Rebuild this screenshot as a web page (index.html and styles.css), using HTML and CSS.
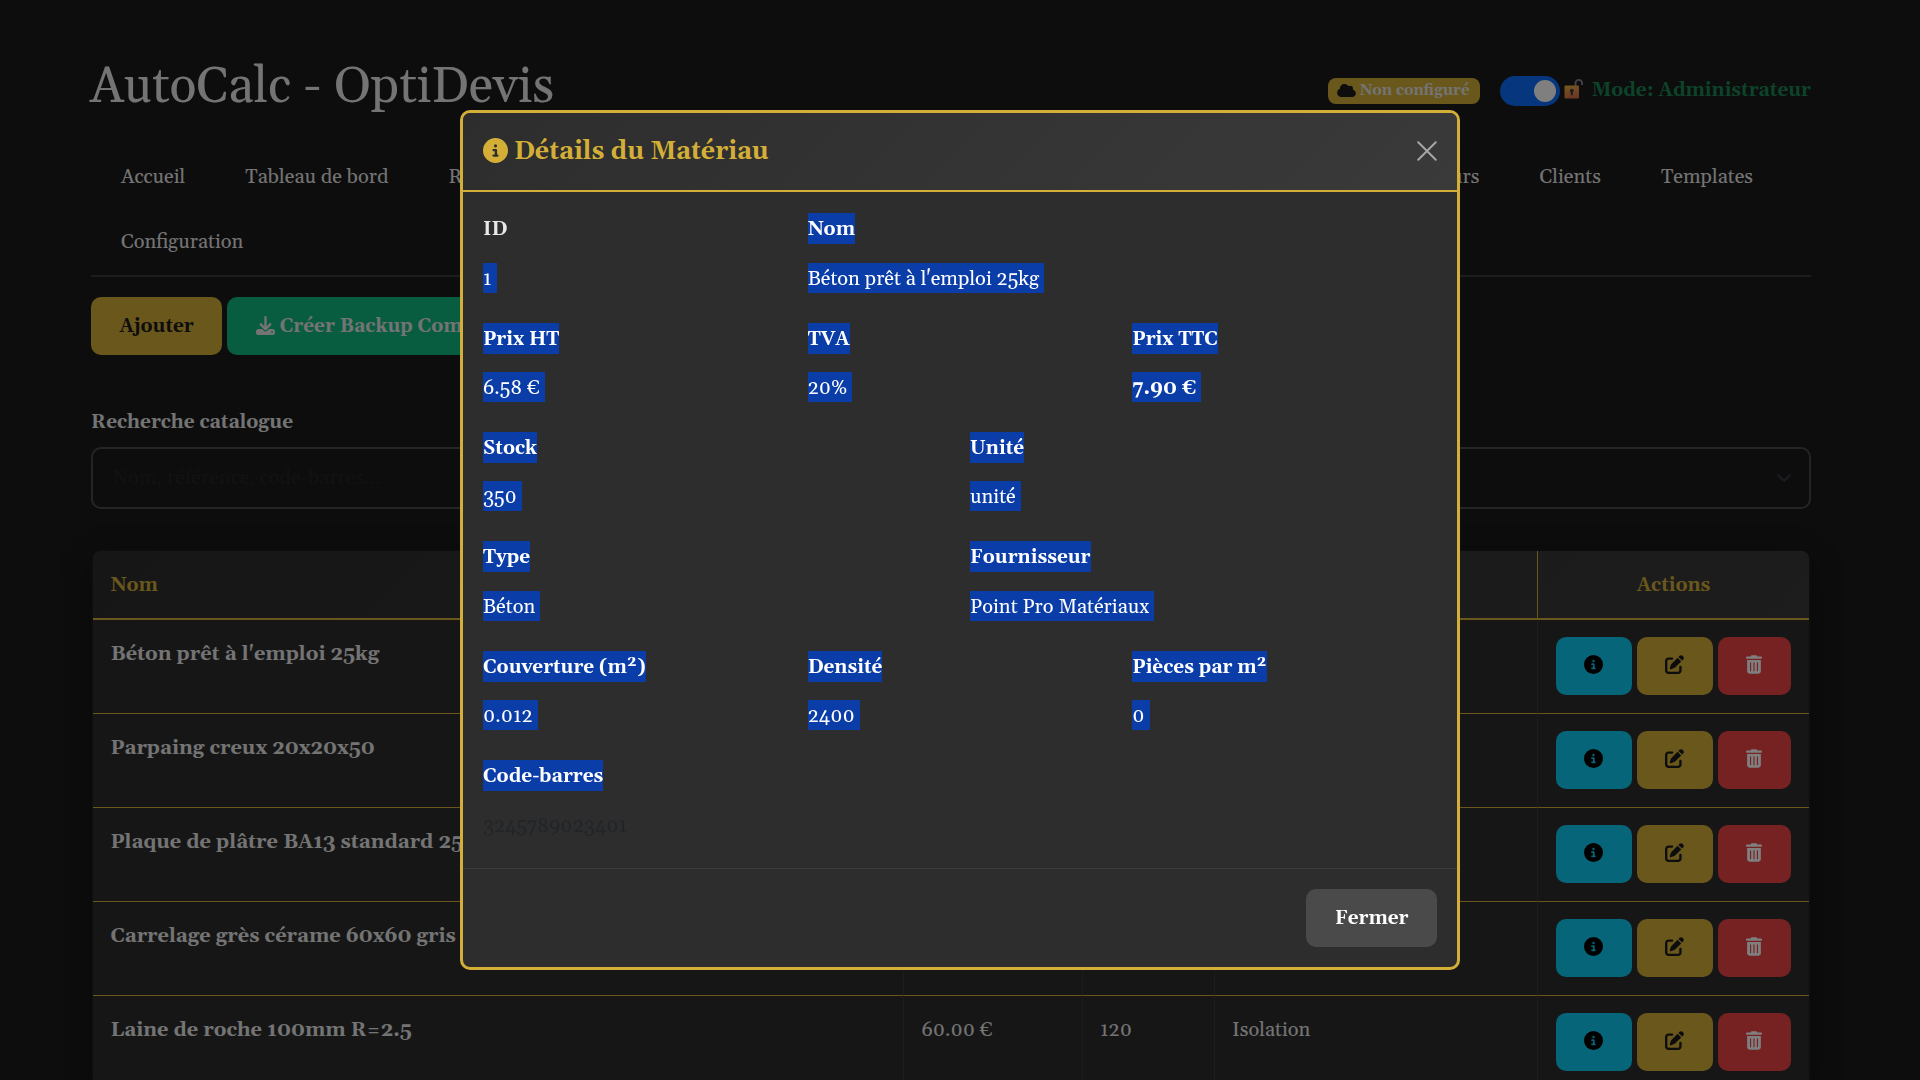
FILE: index.html
```html
<!DOCTYPE html>
<html lang="fr">
<head>
<meta charset="utf-8">
<title>AutoCalc - OptiDevis</title>
<link rel="stylesheet" href="styles.css">
</head>
<body>
<svg class="sprite" aria-hidden="true">
  <symbol id="info" viewBox="0 0 512 512"><path d="M256 512A256 256 0 1 0 256 0a256 256 0 1 0 0 512zM216 336h24V272H216c-13.300 0-24-10.700-24-24s10.700-24 24-24h48c13.300 0 24 10.700 24 24v88h8c13.300 0 24 10.700 24 24s-10.700 24-24 24H216c-13.300 0-24-10.700-24-24s10.700-24 24-24zm40-208a32 32 0 1 1 0 64 32 32 0 1 1 0-64z"/></symbol>
  <symbol id="edit" viewBox="0 0 512 512"><path d="M471.600 21.700c-21.900-21.900-57.300-21.900-79.200 0L362.300 51.700l97.900 97.900 30.100-30.100c21.900-21.900 21.900-57.300 0-79.200L471.600 21.700zm-299.200 220c-6.100 6.100-10.800 13.600-13.500 21.900l-29.600 88.800c-2.900 8.600-.6 18.100 5.800 24.600s15.900 8.700 24.600 5.800l88.800-29.600c8.200-2.700 15.700-7.400 21.900-13.500L437.700 172.300 339.700 74.300 172.400 241.700zM96 64C43 64 0 107 0 160V416c0 53 43 96 96 96H352c53 0 96-43 96-96V320c0-17.700-14.300-32-32-32s-32 14.300-32 32v96c0 17.700-14.300 32-32 32H96c-17.700 0-32-14.300-32-32V160c0-17.700 14.300-32 32-32h96c17.700 0 32-14.300 32-32s-14.300-32-32-32H96z"/></symbol>
  <symbol id="trash" viewBox="0 0 448 512"><path d="M135.200 17.700C140.600 6.800 151.700 0 163.800 0H284.200c12.100 0 23.200 6.800 28.600 17.700L320 32h96c17.700 0 32 14.300 32 32s-14.300 32-32 32H32C14.300 96 0 81.700 0 64S14.300 32 32 32h96l7.200-14.300zM32 128H416V448c0 35.300-28.700 64-64 64H96c-35.300 0-64-28.700-64-64V128zm96 64c-8.800 0-16 7.200-16 16V432c0 8.800 7.200 16 16 16s16-7.200 16-16V208c0-8.800-7.200-16-16-16zm96 0c-8.800 0-16 7.200-16 16V432c0 8.800 7.200 16 16 16s16-7.200 16-16V208c0-8.800-7.200-16-16-16zm96 0c-8.800 0-16 7.200-16 16V432c0 8.800 7.200 16 16 16s16-7.200 16-16V208c0-8.800-7.200-16-16-16z"/></symbol>
  <symbol id="download" viewBox="0 0 512 512"><path d="M288 32c0-17.700-14.300-32-32-32s-32 14.300-32 32V274.700l-73.400-73.400c-12.500-12.500-32.800-12.500-45.300 0s-12.500 32.800 0 45.300l128 128c12.500 12.500 32.800 12.500 45.300 0l128-128c12.500-12.500 12.500-32.800 0-45.300s-32.800-12.500-45.300 0L288 274.700V32zM64 352c-35.300 0-64 28.700-64 64v32c0 35.300 28.700 64 64 64H448c35.300 0 64-28.700 64-64V416c0-35.300-28.700-64-64-64H346.500l-45.300 45.300c-25 25-65.500 25-90.500 0L165.500 352H64zm368 56a24 24 0 1 1 0 48 24 24 0 1 1 0-48z"/></symbol>
  <symbol id="cloud" viewBox="0 0 640 512"><path d="M0 336c0 79.500 64.500 144 144 144H512c70.700 0 128-57.300 128-128c0-61.900-44-113.600-102.400-125.400c4.100-10.700 6.400-22.400 6.400-34.600c0-53-43-96-96-96c-19.700 0-38.100 6-53.300 16.200C367 64.200 315.300 32 256 32C167.600 32 96 103.600 96 192c0 2.700 .1 5.400 .2 8.100C40.200 219.800 0 273.200 0 336z"/></symbol>
</svg>

<div class="page">
  <header class="top">
    <h1>AutoCalc - OptiDevis</h1>
    <div class="status">
      <span class="badge"><svg class="ic-cloud"><use href="#cloud"/></svg>Non configuré</span>
      <span class="switch"><span class="knob"></span></span>
      <svg class="lock" viewBox="0 0 20 20">
        <defs><linearGradient id="lockfill" x1="0" y1="0" x2="0.300" y2="1"><stop offset="0" stop-color="#efb440"/><stop offset="1" stop-color="#d97048"/></linearGradient></defs>
        <path d="M11.500 7V4.200a3.300 3.300 0 0 1 6.600 0V6" fill="none" stroke="#8d8494" stroke-width="1.800"/>
        <rect x="0.500" y="6.500" width="14.500" height="13" rx="1.200" fill="url(#lockfill)"/>
        <path d="M7.800 9.700a2 2 0 0 1 1 3.700v2.800h-2v-2.800a2 2 0 0 1 1-3.700z" fill="#45303c"/>
      </svg>
      <span class="mode">Mode: Administrateur</span>
    </div>
  </header>

  <nav class="nav">
    <div class="nav-row">
      <a>Accueil</a><a>Tableau de bord</a><a>Rapports</a>
      <a class="push">Fournisseurs</a><a>Clients</a><a>Templates</a>
    </div>
    <div class="nav-row"><a>Configuration</a></div>
  </nav>

  <div class="toolbar">
    <button class="btn gold">Ajouter</button>
    <button class="btn green"><svg class="ic"><use href="#download"/></svg>Créer Backup Complet</button>
  </div>

  <div class="search">
    <div class="field"><label>Recherche catalogue</label><div class="box placeholder">Nom, référence, code-barres...</div></div>
    <div class="field"><div class="box select"><svg class="chev" viewBox="0 0 16 16"><path d="m2 5 6 6 6-6"/></svg></div></div>
  </div>

  <div class="table">
    <div class="row head"><div>Nom</div><div></div><div></div><div></div><div>Actions</div></div>
    <div class="row"><div>Béton prêt à l'emploi 25kg</div><div></div><div></div><div></div><div><button class="btn cyan"><svg class="ic"><use href="#info"/></svg></button><button class="btn gold"><svg class="ic"><use href="#edit"/></svg></button><button class="btn red"><svg class="ic slim"><use href="#trash"/></svg></button></div></div>
    <div class="row"><div>Parpaing creux 20x20x50</div><div></div><div></div><div></div><div><button class="btn cyan"><svg class="ic"><use href="#info"/></svg></button><button class="btn gold"><svg class="ic"><use href="#edit"/></svg></button><button class="btn red"><svg class="ic slim"><use href="#trash"/></svg></button></div></div>
    <div class="row"><div>Plaque de plâtre BA13 standard 250x120</div><div></div><div></div><div></div><div><button class="btn cyan"><svg class="ic"><use href="#info"/></svg></button><button class="btn gold"><svg class="ic"><use href="#edit"/></svg></button><button class="btn red"><svg class="ic slim"><use href="#trash"/></svg></button></div></div>
    <div class="row"><div>Carrelage grès cérame 60x60 gris</div><div></div><div></div><div></div><div><button class="btn cyan"><svg class="ic"><use href="#info"/></svg></button><button class="btn gold"><svg class="ic"><use href="#edit"/></svg></button><button class="btn red"><svg class="ic slim"><use href="#trash"/></svg></button></div></div>
    <div class="row"><div>Laine de roche 100mm R=2.5</div><div>60.00 €</div><div>120</div><div>Isolation</div><div><button class="btn cyan"><svg class="ic"><use href="#info"/></svg></button><button class="btn gold"><svg class="ic"><use href="#edit"/></svg></button><button class="btn red"><svg class="ic slim"><use href="#trash"/></svg></button></div></div>
  </div>
</div>

<div class="backdrop">
  <section class="modal">
    <div class="modal-head">
      <svg class="ic-title"><use href="#info"/></svg>
      <h2>Détails du Matériau</h2>
      <svg class="close" viewBox="0 0 16 16"><path d="M1 1l14 14M15 1L1 15"/></svg>
    </div>
    <div class="modal-body">
      <div class="line three"><div><b>ID</b><p><span class="sel">1</span></p></div><div class="wide"><b class="sel">Nom</b><p><span class="sel">Béton prêt à l'emploi 25kg</span></p></div></div>
      <div class="line three"><div><b class="sel">Prix HT</b><p><span class="sel">6.58 €</span></p></div><div><b class="sel">TVA</b><p><span class="sel">20%</span></p></div><div><b class="sel">Prix TTC</b><p><span class="sel strong">7.90 €</span></p></div></div>
      <div class="line two"><div><b class="sel">Stock</b><p><span class="sel">350</span></p></div><div><b class="sel">Unité</b><p><span class="sel">unité</span></p></div></div>
      <div class="line two"><div><b class="sel">Type</b><p><span class="sel">Béton</span></p></div><div><b class="sel">Fournisseur</b><p><span class="sel">Point Pro Matériaux</span></p></div></div>
      <div class="line three"><div><b class="sel">Couverture (m²)</b><p><span class="sel">0.012</span></p></div><div><b class="sel">Densité</b><p><span class="sel">2400</span></p></div><div><b class="sel">Pièces par m²</b><p><span class="sel">0</span></p></div></div>
      <div class="line two last"><div><b class="sel">Code-barres</b><p class="dark">3245789023401</p></div></div>
    </div>
    <div class="modal-foot"><button class="btn grey">Fermer</button></div>
  </section>
</div>
</body>
</html>
```
FILE: styles.css
```css
*{box-sizing:border-box}
html,body{height:100%;overflow:hidden}
body{margin:0;background:#1a1a1a;color:#e8e8e8;font:20px/30px Gelasio,Georgia,"Liberation Serif",serif}
h1,h2,p{margin:0}
svg{flex:none;fill:currentColor}
.sprite{display:none}
.page{width:1720px;margin-left:91px;padding-top:55px}

.top{display:flex;justify-content:space-between;height:88px}
h1{font-size:50px;line-height:60px;font-weight:400;margin-left:-1px;padding-top:3px}
.status{display:flex;align-items:center;height:30px;margin-top:20px;padding-top:1px}
.badge{display:flex;align-items:center;width:152px;height:26px;padding:0 9px;gap:4px;margin-right:20px;border-radius:8px;background:#d4af37;font-size:15px;line-height:26px;font-weight:700}
.ic-cloud{width:19px;height:15px;color:#1a1a1a}
.switch{display:flex;align-items:center;justify-content:flex-end;width:60px;height:30px;padding-right:4px;margin-right:4px;border-radius:15px;background:#0d6efd}
.knob{width:22px;height:22px;border-radius:50%;background:#fff}
.lock{width:20px;height:20px;margin-right:8px;margin-top:-3px}
.mode{font-size:19px;font-weight:700;color:#198754;margin-top:-2px}

.nav{height:134px;border-bottom:2px solid #3a3a3a}
.nav-row{display:flex;height:65px;padding:19px 28px 0 0}
.nav-row a{padding:0 30px}
.nav-row .push{margin-left:auto}

.toolbar{display:flex;gap:5px;margin-top:20px}
.btn{display:flex;align-items:center;height:58px;gap:5px;padding:0 28.5px;border:0;border-radius:10px;font:700 19px/30px Gelasio,Georgia,"Liberation Serif",serif;white-space:nowrap}
.btn .ic{width:19px;height:19px;margin-top:-2px}
.row .btn{padding:0 29px 0 28px}
.row .btn .ic{margin-top:-3px}
.row .btn .slim{width:16px}
.gold{background:#d4af37;color:#1a1a1a}
.green{background:#10b981;color:#e8e8e8}
.cyan{background:#0dcaf0;color:#000}
.red{background:#ef4444;color:#fff}
.grey{background:#4a4a4a;color:#fff}

.search{display:flex;align-items:flex-end;gap:24px;margin-top:52px}
.field{flex:1}
.field label{display:block;font-size:19px;line-height:31px;font-weight:700;margin-bottom:9px}
.box{display:flex;align-items:center;height:62px;padding:0 20px;border:2px solid #4a4a4a;border-radius:10px}
.placeholder{color:#212529;padding-bottom:1px}
.select{justify-content:flex-end;padding-right:17px}
.chev{width:16px;height:16px;fill:none;stroke:#343a40;stroke-width:2;stroke-linecap:round;stroke-linejoin:round}

.table{width:1716px;margin:42px 0 0 2px;border-radius:8px 8px 0 0;background:#2d2d2d;box-shadow:0 0 0 2px #1a1a1a,0 8px 32px rgba(0,0,0,.4)}
.row{display:grid;grid-template-columns:811px 178.500px 132px 323.500px 271px;height:94px}
.row>div{padding:18px 17.500px 0;line-height:32px;border-right:1px solid #3a3a3a;border-bottom:1px solid #d4af37;white-space:nowrap}
.row>div:first-child{font-weight:700}
.row>div:last-child{display:flex;gap:5px;padding:17px 0 0 18px;border-right:0}
.head{height:69px;border-radius:8px 8px 0 0;background:linear-gradient(135deg,#2d2d2d,#3a3a3a);border-bottom:2px solid #d4af37;color:#d4af37;font-size:19px;font-weight:700}
.head>div{line-height:33px;border-right-color:#d4af37;border-bottom:0}
.row.head>div:last-child{justify-content:center;padding:18px 0 0;border-bottom:0}

.backdrop{position:fixed;inset:0;display:flex;align-items:center;justify-content:center;background:rgba(0,0,0,.5)}
.modal{display:flex;flex-direction:column;width:1000px;height:860px;border:3px solid #d4af37;border-radius:10px;background:#2d2d2d;overflow:hidden}
.modal-head{display:flex;flex:none;align-items:center;height:79px;padding:0 20px;gap:6px;border-bottom:2px solid #d4af37;color:#d4af37;background:linear-gradient(135deg,#2d2d2d,#3a3a3a)}
h2{flex:1;font-size:25px;line-height:37px;padding-top:2px}
.ic-title{width:25px;height:25px;margin-top:-2px}
.close{width:20px;height:20px;margin-top:-1px;fill:none;stroke:#a6a6a6;stroke-width:1.600;stroke-linecap:round}
.modal-body{flex:1;padding:21.200px 0 0 20px}
.line{display:grid;width:974px;height:109.400px}
.line.last{height:100px}
.three{grid-template-columns:repeat(3,1fr)}
.two{grid-template-columns:repeat(2,1fr)}
.wide{grid-column:span 2}
.line b{display:block;width:max-content;height:31px;font-size:19px;line-height:33px}
.line p{margin-top:18.500px;line-height:32px}
.sel{background:#0a3da8;color:#fff}
.line p .sel{display:inline-block;height:30px;padding-right:5px}
.strong{font-weight:700}
.line p.dark{color:#212529}
.modal-foot{display:flex;flex:none;justify-content:flex-end;height:99px;padding:20px 20px 0 0;border-top:1px solid #3d3d3d}
```
